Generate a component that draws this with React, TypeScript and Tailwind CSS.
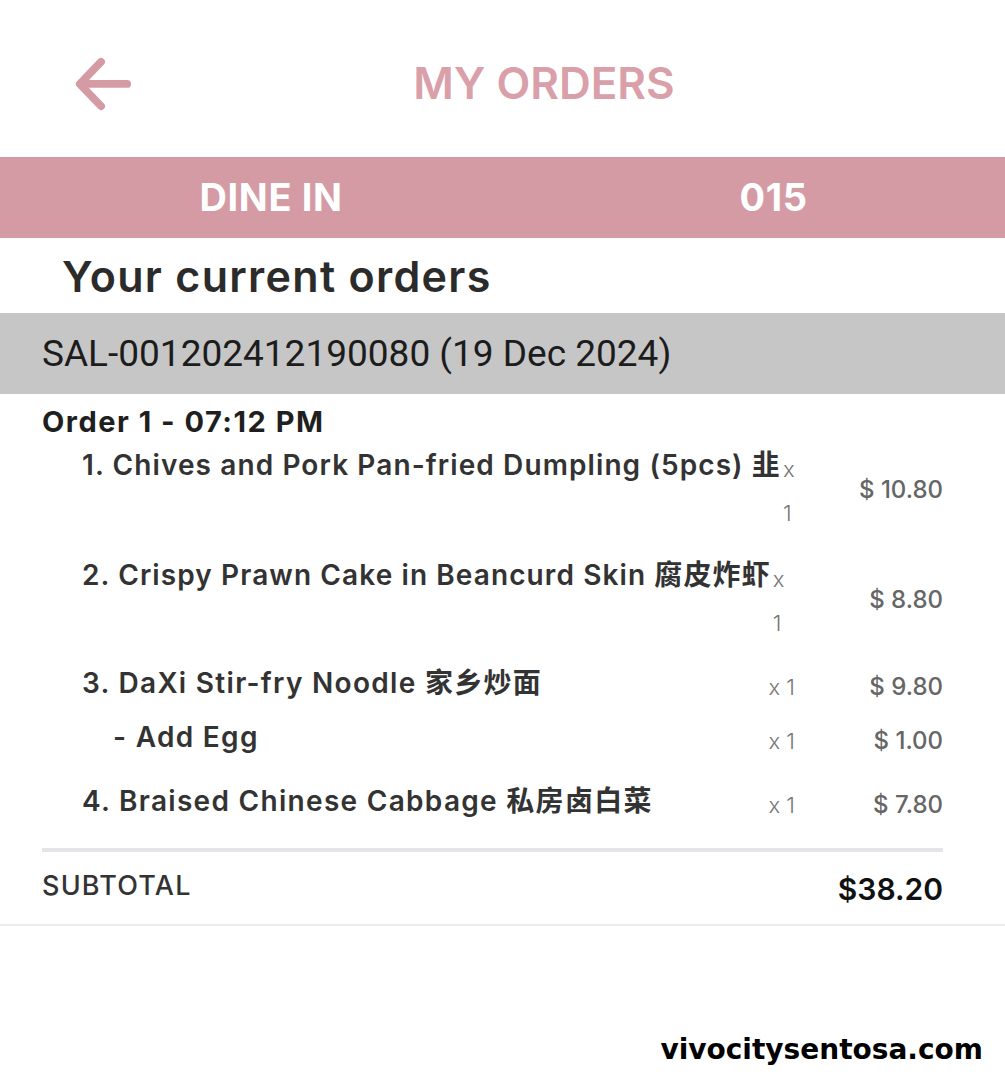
const items = [
  { name: '1. Chives and Pork Pan-fried Dumpling (5pcs) 韭', price: '$ 10.80' },
  { name: '2. Crispy Prawn Cake in Beancurd Skin 腐皮炸虾', price: '$ 8.80' },
];

const font = { fontFamily: 'Inter, "Noto Sans CJK SC", sans-serif' };

function BackArrow() {
  return (
    <svg width="60" height="56" viewBox="0 0 60 56" fill="none" stroke="#d49ba5" strokeWidth="8" strokeLinecap="round" strokeLinejoin="round">
      <path d="M55 29H7" />
      <path d="M28 6L6 29L28 52" />
    </svg>
  );
}

function Row({ label, price, indent = 'pl-[40px]', top = 'mt-[18px]' }: { label: string; price: string; indent?: string; top?: string }) {
  return (
    <div className={`flex items-start ${top}`}>
      <div className={`flex-1 ${indent} text-[28px] leading-[40px] font-semibold tracking-[1.3px] text-[#333] whitespace-nowrap`}>{label}</div>
      <div className="w-[32px] mt-[2px] text-right text-[22px] leading-[44px] font-light text-[#777]">x 1</div>
      <div className="w-[148px] mt-[2px] text-right text-[24px] leading-[44px] font-medium text-[#666]">{price}</div>
    </div>
  );
}

export default function App() {
  return (
    <div className="relative h-[1080px] w-full bg-white overflow-hidden" style={font}>
      <header className="flex items-center h-[157px] pl-[74px] pt-[9px]">
        <div className="w-[58px] flex items-center">
          <BackArrow />
        </div>
        <h1 className="flex-1 pr-[49px] text-center text-[44px] font-semibold text-[#d9a0aa]">MY ORDERS</h1>
      </header>

      <div className="grid grid-cols-[542px_1fr] items-center h-[81px] bg-[#d49ba5] text-white text-[38px] font-bold tracking-[0.6px]">
        <div className="text-center">DINE IN</div>
        <div className="text-center">015</div>
      </div>

      <div className="h-[75px] flex items-center pl-[62px] pt-[2px]">
        <h2 className="text-[43px] font-semibold text-[#2b2b2b] tracking-[1.3px]">Your current orders</h2>
      </div>

      <div className="h-[81px] flex items-center pl-[42px] bg-[#c6c6c6]">
        <p className="text-[37px] text-[#1c1c1c]" style={{ fontFamily: 'Roboto, sans-serif' }}>SAL-001202412190080 (19 Dec 2024)</p>
      </div>

      <section className="pl-[42px] pr-[62px]">
        <div className="mt-[10px] text-[29px] leading-[36px] font-bold tracking-[1.5px] text-[#1f1f1f]">Order 1 - 07:12 PM</div>

        {items.map((it, i) => (
          <div key={i} className={`flex items-center ${i === 0 ? 'mt-[5px]' : 'mt-[20px]'}`}>
            <div className="flex items-start">
              <div className="pl-[40px] text-[28px] leading-[40px] font-semibold tracking-[1.1px] text-[#333] whitespace-nowrap">{it.name}</div>
              <div className="w-[14px] ml-[2px] mt-[2px] text-[22px] leading-[44px] font-light text-[#777] break-all">x 1</div>
            </div>
            <div className="flex-1 text-right text-[24px] font-medium text-[#666]">{it.price}</div>
          </div>
        ))}

        <Row label="3. DaXi Stir-fry Noodle 家乡炒面" price="$ 9.80" top="mt-[18px]" />
        <Row label="- Add Egg" price="$ 1.00" indent="pl-[71px]" top="mt-[8px]" />
        <Row label="4. Braised Chinese Cabbage 私房卤白菜" price="$ 7.80" top="mt-[18px]" />

        <div className="mt-[21px] h-[4px] bg-[#e4e4e9]" />

        <div className="flex items-center justify-between h-[72px]">
          <span className="text-[27px] font-medium tracking-[1.2px] text-[#333] -mt-[4px]">SUBTOTAL</span>
          <span className="text-[30px] font-semibold text-[#111] mt-[2px]">$38.20</span>
        </div>
      </section>
      <div className="h-[2px] bg-[#ededed]" />

      <div className="absolute right-[22px] bottom-[9px] text-[28px] font-bold text-black" style={{ fontFamily: '"DejaVu Sans", sans-serif' }}>
        vivocitysentosa.com
      </div>
    </div>
  );
}
